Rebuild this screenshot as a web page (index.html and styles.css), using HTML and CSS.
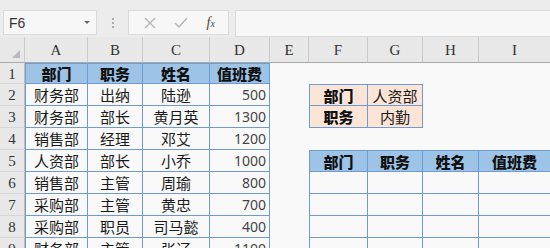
FILE: index.html
```html
<!DOCTYPE html>
<html lang="zh-CN">
  <head>
    <meta charset="utf-8" />
    <title>值班费</title>
    <link rel="stylesheet" href="styles.css">
  </head>
  <body>
    <div class="toolbar">
      <div class="namebox">
        <span>F6</span>
        <span class="arrow"></span>
      </div>
      <div class="dots"><i></i><i></i><i></i></div>
      <div class="fbtns">
        <svg width="12" height="12" viewBox="0 0 12 12"><path d="M1 1L11 11M11 1L1 11" stroke="#b4b4b4" stroke-width="1.4" fill="none"/></svg>
        <svg width="14" height="12" viewBox="0 0 14 12"><path d="M1 6L5 10L13 1" stroke="#b4b4b4" stroke-width="1.4" fill="none"/></svg>
        <span class="fx">f<small>x</small></span>
      </div>
      <div class="finput"></div>
    </div>

    <div class="sheet">
      <div class="corner"><span></span></div>
      <div class="ch">A</div><div class="ch">B</div><div class="ch">C</div><div class="ch">D</div>
      <div class="ch">E</div><div class="ch">F</div><div class="ch">G</div><div class="ch">H</div><div class="ch">I</div>

      <div class="rh">1</div>
      <div class="c t th l tp">部门</div><div class="c t th tp">职务</div><div class="c t th tp">姓名</div><div class="c t th tp">值班费</div>
      <div class="c"></div><div class="c"></div><div class="c"></div><div class="c"></div><div class="c"></div>

      <div class="rh">2</div>
      <div class="c t l">财务部</div><div class="c t">出纳</div><div class="c t">陆逊</div><div class="c t n">500</div>
      <div class="c"></div><div class="c t pk b l tp">部门</div><div class="c t pk tp">人资部</div><div class="c"></div><div class="c"></div>

      <div class="rh">3</div>
      <div class="c t l">财务部</div><div class="c t">部长</div><div class="c t">黄月英</div><div class="c t n">1300</div>
      <div class="c"></div><div class="c t pk b l">职务</div><div class="c t pk">内勤</div><div class="c"></div><div class="c"></div>

      <div class="rh">4</div>
      <div class="c t l">销售部</div><div class="c t">经理</div><div class="c t">邓艾</div><div class="c t n">1200</div>
      <div class="c"></div><div class="c"></div><div class="c"></div><div class="c"></div><div class="c"></div>

      <div class="rh">5</div>
      <div class="c t l">人资部</div><div class="c t">部长</div><div class="c t">小乔</div><div class="c t n">1000</div>
      <div class="c"></div><div class="c t th l tp">部门</div><div class="c t th tp">职务</div><div class="c t th tp">姓名</div><div class="c t th tp">值班费</div>

      <div class="rh">6</div>
      <div class="c t l">销售部</div><div class="c t">主管</div><div class="c t">周瑜</div><div class="c t n">800</div>
      <div class="c"></div><div class="c t l"></div><div class="c t"></div><div class="c t"></div><div class="c t"></div>

      <div class="rh">7</div>
      <div class="c t l">采购部</div><div class="c t">主管</div><div class="c t">黄忠</div><div class="c t n">700</div>
      <div class="c"></div><div class="c t l"></div><div class="c t"></div><div class="c t"></div><div class="c t"></div>

      <div class="rh">8</div>
      <div class="c t l">采购部</div><div class="c t">职员</div><div class="c t">司马懿</div><div class="c t n">400</div>
      <div class="c"></div><div class="c t l"></div><div class="c t"></div><div class="c t"></div><div class="c t"></div>

      <div class="rh">9</div>
      <div class="c t l">财务部</div><div class="c t">主管</div><div class="c t">张辽</div><div class="c t n">1100</div>
      <div class="c"></div><div class="c t l"></div><div class="c t"></div><div class="c t"></div><div class="c t"></div>
    </div>
  </body>
</html>
```

FILE: styles.css
```css
body {
  margin: 0;
  width: 550px;
  height: 248px;
  overflow: hidden;
  background: #f9f9f9;
  font-family: "Noto Sans CJK SC", sans-serif;
}
.toolbar {
  display: flex;
  height: 37px;
  padding-top: 10px;
  box-sizing: border-box;
  background: #ececec;
}
.namebox {
  margin-left: 3px;
  width: 94px;
  height: 25px;
  box-sizing: border-box;
  background: #f7f7f7;
  border: 1px solid #d9d9d9;
  display: flex;
  align-items: center;
  justify-content: space-between;
  padding: 0 6px 0 5px;
  font-family: "Liberation Sans", sans-serif;
  font-size: 14px;
  color: #333;
}
.arrow {
  width: 0;
  height: 0;
  border-left: 3px solid transparent;
  border-right: 3px solid transparent;
  border-top: 3px solid #666;
}
.dots {
  width: 31px;
  display: flex;
  flex-direction: column;
  align-items: center;
  justify-content: center;
  gap: 2px;
  height: 25px;
}
.dots i {
  width: 2px;
  height: 2px;
  background: #aaa;
}
.fbtns {
  width: 101px;
  height: 25px;
  box-sizing: border-box;
  background: #f7f7f7;
  border: 1px solid #d9d9d9;
  display: flex;
  align-items: center;
  justify-content: space-around;
  padding: 0 4px 0 6px;
}
.fx {
  font-family: "Liberation Serif", serif;
  font-style: italic;
  font-size: 14px;
  color: #444;
}
.fx small {
  font-size: 10px;
}
.finput {
  margin-left: 6px;
  flex: 1;
  height: 25px;
  background: #f7f7f7;
  border: 1px solid #d9d9d9;
  border-right: none;
}
.sheet {
  display: grid;
  grid-template-columns: 25px 63px 55px 67px 60px 39px 59px 55px 56px 72px;
  grid-template-rows: 26px 21px repeat(8, 22px);
}
.corner {
  background: #e8e8e8;
  border-right: 1px solid #cbcbcb;
  border-bottom: 1px solid #a9a9a9;
  box-sizing: border-box;
  position: relative;
}
.corner span {
  position: absolute;
  right: 4px;
  bottom: 4px;
  width: 0;
  height: 0;
  border-left: 8px solid transparent;
  border-bottom: 8px solid #b9b9b9;
}
.ch {
  background: #e8e8e8;
  border-right: 1px solid #cbcbcb;
  border-bottom: 1px solid #a9a9a9;
  box-sizing: border-box;
  display: flex;
  align-items: center;
  justify-content: center;
  font-family: "Liberation Serif", serif;
  font-size: 15px;
  color: #333;
  padding-top: 2px;
}
.rh {
  background: #e8e8e8;
  border-right: 1px solid #bdbdbd;
  border-bottom: 1px solid #d6d6d6;
  box-sizing: border-box;
  display: flex;
  align-items: center;
  justify-content: center;
  font-family: "Liberation Serif", serif;
  font-size: 15px;
  color: #333;
  padding-top: 2px;
}
.c {
  box-sizing: border-box;
  display: flex;
  align-items: center;
  justify-content: center;
  font-size: 15px;
  color: #1a1a1a;
  white-space: nowrap;
  overflow: hidden;
}
.t {
  border-right: 1px solid #6f9bd3;
  border-bottom: 1px solid #6f9bd3;
}
.l {
  border-left: 1px solid #6f9bd3;
}
.tp {
  border-top: 1px solid #6f9bd3;
}
.th {
  background: #9dc3e6;
  font-weight: 900;
  color: #111;
}
.pk {
  background: #fce4d6;
}
.b {
  font-weight: 900;
  color: #111;
}
.n {
  justify-content: flex-end;
  padding-right: 3px;
  font-family: "Noto Sans", sans-serif;
  font-size: 14px;
  color: #444;
}
```
